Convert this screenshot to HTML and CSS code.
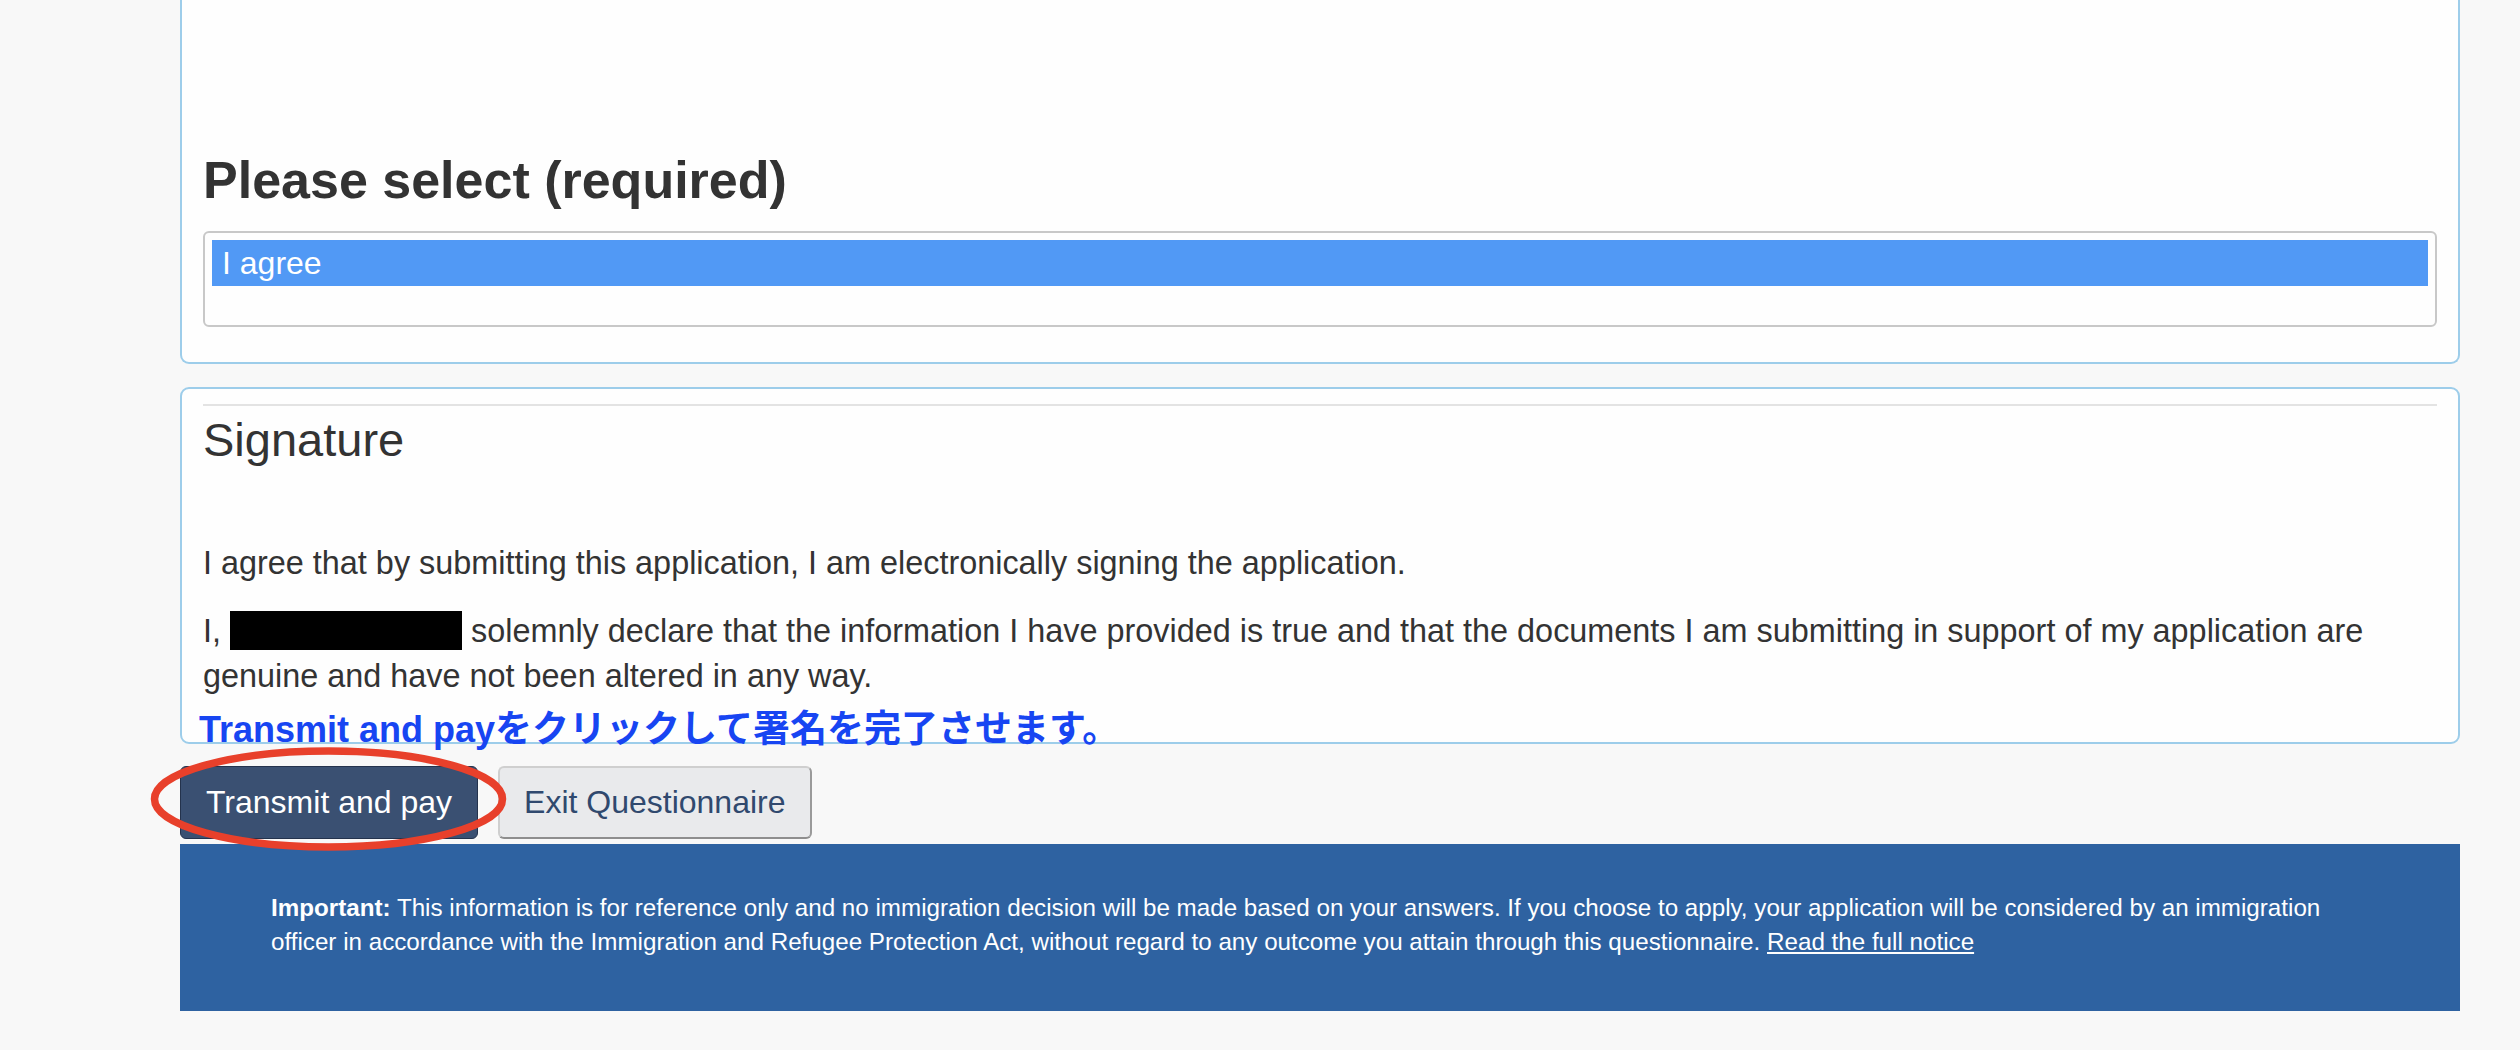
FILE: index.html
```html
<!DOCTYPE html>
<html lang="en">
<head>
<meta charset="utf-8">
<title>Signature</title>
<link rel="stylesheet" href="styles.css">
</head>
<body>
<main class="page">
  <section class="card card-open">
    <h2 class="select-title">Please select (required)</h2>
    <div class="listbox" role="listbox" aria-label="Please select (required)">
      <div class="option selected" role="option" aria-selected="true">I agree</div>
    </div>
  </section>

  <section class="card card-signature">
    <div class="rule"></div>
    <h3 class="sig-title">Signature</h3>
    <p class="body-text">I agree that by submitting this application, I am electronically signing the application.</p>
    <p class="body-text">I, <span class="redact"></span> solemnly declare that the information I have provided is true and that the documents I am submitting in support of my application are genuine and have not been altered in any way.</p>
    <div class="annotation">Transmit and pay<span class="jp">をクリックして署名を完了させます。</span></div>
  </section>

  <div class="actions">
    <button class="btn btn-primary" type="button">Transmit and pay</button>
    <button class="btn btn-default" type="button">Exit Questionnaire</button>
    <svg class="circle-mark" width="357" height="104" viewBox="0 0 357 104" aria-hidden="true">
      <ellipse cx="178.5" cy="52" rx="174" ry="48" fill="none" stroke="#e8402b" stroke-width="7.5"/>
    </svg>
  </div>

  <footer class="notice">
    <p><strong>Important:</strong> This information is for reference only and no immigration decision will be made based on your answers. If you choose to apply, your application will be considered by an immigration officer in accordance with the Immigration and Refugee Protection Act, without regard to any outcome you attain through this questionnaire. <a href="#">Read the full notice</a></p>
  </footer>
</main>
</body>
</html>
```

FILE: styles.css
```css
html, body {
  margin: 0;
  padding: 0;
  background: #f8f8f8;
  font-family: "Liberation Sans", Arial, Helvetica, sans-serif;
  color: #333333;
}

.page {
  width: 2280px;
  margin-left: 180px;
}

.card {
  background: #fefefe;
  border: 2px solid #9dcdea;
  border-radius: 9px;
  box-sizing: border-box;
}

.card-open {
  border-top: none;
  border-radius: 0 0 9px 9px;
  padding: 152px 21px 35px;
}

.select-title {
  margin: 0 0 22px;
  font-size: 52px;
  line-height: 57px;
  font-weight: 700;
  color: #333333;
}

.listbox {
  height: 96px;
  box-sizing: border-box;
  border: 2px solid #c8c8c8;
  border-radius: 6px;
  padding: 7px;
  background: #fefefe;
}

.option {
  height: 46px;
  line-height: 46px;
  font-size: 32px;
  padding-left: 10px;
  color: #ffffff;
}

.option.selected {
  background: #5199f5;
}

.card-signature {
  margin-top: 23px;
  padding: 15px 21px 20px;
  position: relative;
}

.rule {
  height: 2px;
  background: #e3e3e3;
  margin-bottom: 8px;
}

.sig-title {
  margin: 0 0 75px;
  font-size: 47px;
  line-height: 52px;
  font-weight: 400;
  color: #333333;
}

.body-text {
  margin: 0 0 23px;
  font-size: 32.4px;
  line-height: 45px;
  color: #333333;
}

.redact {
  display: inline-block;
  width: 232px;
  height: 39px;
  background: #000000;
  vertical-align: -8px;
}

.annotation {
  position: absolute;
  left: 17px;
  top: 319px;
  font-size: 36px;
  line-height: 36px;
  font-weight: 700;
  color: #1745f2;
  white-space: nowrap;
}

.annotation .jp {
  font-family: "Noto Sans CJK JP", "Liberation Sans", sans-serif;
  font-size: 37px;
}

.actions {
  position: relative;
  display: flex;
  gap: 20px;
  margin-top: 22px;
  height: 73px;
}

.btn {
  height: 73px;
  box-sizing: border-box;
  font-family: "Liberation Sans", Arial, Helvetica, sans-serif;
  font-size: 32px;
  border-radius: 6px;
  cursor: pointer;
}

.btn-primary {
  padding: 0 25px;
  background: #3a5072;
  color: #ffffff;
  border: 1px solid #24334d;
}

.btn-default {
  padding: 0 24px;
  background: #e9eaec;
  color: #30496e;
  border: 2px solid #cfcfcf;
  border-right-color: #9a9a9a;
  border-bottom-color: #8e8e8e;
}

.circle-mark {
  position: absolute;
  left: -30px;
  top: -19px;
  z-index: 5;
  pointer-events: none;
}

.notice {
  margin-top: 5px;
  background: #2e62a1;
  color: #ffffff;
  padding: 47px 91px 52px;
  font-size: 24.2px;
  line-height: 34px;
}

.notice p {
  margin: 0;
}

.notice a {
  color: #ffffff;
  text-decoration: underline;
}
```
